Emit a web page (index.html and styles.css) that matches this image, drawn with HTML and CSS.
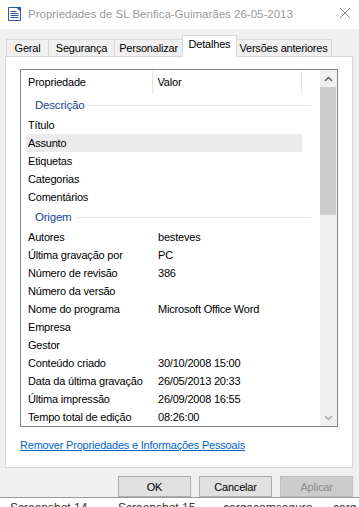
FILE: index.html
```html
<!DOCTYPE html>
<html lang="pt">
<head>
<meta charset="utf-8">
<title>Propriedades</title>
<link rel="stylesheet" href="styles.css">
</head>
<body>
<div class="dialog">
  <div class="titlebar">
    <svg class="app-icon" width="13" height="14" viewBox="0 0 13 14">
      <path d="M0.5 0.5 H9 L12.5 4 V13.5 H0.5 Z" fill="#ffffff" stroke="#2b579a"/>
      <path d="M8 0 H13 V5 Z" fill="#2b579a"/>
      <rect x="2.5" y="4" width="6" height="1" fill="#2b579a"/>
      <rect x="2.5" y="6" width="8" height="1" fill="#2b579a"/>
      <rect x="2.5" y="8" width="8" height="1" fill="#2b579a"/>
      <rect x="2.5" y="10" width="8" height="1" fill="#2b579a"/>
    </svg>
    <span class="title">Propriedades de SL Benfica-Guimarães 26-05-2013</span>
    <svg class="close" width="10" height="10" viewBox="0 0 10 10">
      <path d="M0 0 L10 10 M10 0 L0 10" stroke="#8a8a8a" stroke-width="1"/>
    </svg>
  </div>

  <div class="tabs">
    <div class="tab tab-geral">Geral</div>
    <div class="tab tab-seg">Segurança</div>
    <div class="tab tab-pers">Personalizar</div>
    <div class="tab tab-det active">Detalhes</div>
    <div class="tab tab-ver">Versões anteriores</div>
  </div>

  <div class="panel">
    <div class="listbox">
      <div class="list">
        <div class="header">
          <div class="hcell hname">Propriedade</div>
          <div class="hcell hvalue">Valor</div>
        </div>
        <div class="group"><span>Descrição</span><i></i></div>
        <div class="row"><span class="k">Título</span><span class="v"></span></div>
        <div class="row selected"><span class="k">Assunto</span><span class="v"></span></div>
        <div class="row"><span class="k">Etiquetas</span><span class="v"></span></div>
        <div class="row"><span class="k">Categorias</span><span class="v"></span></div>
        <div class="row"><span class="k">Comentários</span><span class="v"></span></div>
        <div class="group group-2"><span>Origem</span><i></i></div>
        <div class="row"><span class="k">Autores</span><span class="v">besteves</span></div>
        <div class="row"><span class="k">Última gravação por</span><span class="v">PC</span></div>
        <div class="row"><span class="k">Número de revisão</span><span class="v">386</span></div>
        <div class="row"><span class="k">Número da versão</span><span class="v"></span></div>
        <div class="row"><span class="k">Nome do programa</span><span class="v">Microsoft Office Word</span></div>
        <div class="row"><span class="k">Empresa</span><span class="v"></span></div>
        <div class="row"><span class="k">Gestor</span><span class="v"></span></div>
        <div class="row"><span class="k">Conteúdo criado</span><span class="v">30/10/2008 15:00</span></div>
        <div class="row"><span class="k">Data da última gravação</span><span class="v">26/05/2013 20:33</span></div>
        <div class="row"><span class="k">Última impressão</span><span class="v">26/09/2008 16:55</span></div>
        <div class="row"><span class="k">Tempo total de edição</span><span class="v">08:26:00</span></div>
      </div>
      <div class="scrollbar">
        <div class="arrow">
          <svg width="9" height="6" viewBox="0 0 9 6"><path d="M1 5 L4.5 1.5 L8 5" fill="none" stroke="#606060" stroke-width="1.4"/></svg>
        </div>
        <div class="track"><div class="thumb"></div></div>
        <div class="arrow">
          <svg width="9" height="6" viewBox="0 0 9 6"><path d="M1 1 L4.5 4.5 L8 1" fill="none" stroke="#a6a6a6" stroke-width="1.4"/></svg>
        </div>
      </div>
    </div>
    <a class="link" href="#">Remover Propriedades e Informações Pessoais</a>
  </div>

  <div class="buttons">
    <button class="btn">OK</button>
    <button class="btn">Cancelar</button>
    <button class="btn disabled">Aplicar</button>
  </div>
</div>
<div class="behind">
  <span class="b1">Screenshot 14</span>
  <span class="b2">Screenshot 15</span>
  <span class="b3">cargacomseguro</span>
  <span class="b4">carg</span>
</div>
</body>
</html>
```

FILE: styles.css
```css
html, body {
  margin: 0;
  padding: 0;
  height: 507px;
  overflow: hidden;
  background: #ffffff;
}

body {
  font-family: "Liberation Sans", Arial, sans-serif;
  font-size: 11px;
  letter-spacing: -0.2px;
  color: #000;
}

.dialog {
  background: #f0f0f0;
  height: 498px;
  border-bottom: 1px solid #9a9a9a;
  box-sizing: border-box;
}

.titlebar {
  height: 29px;
  background: #ffffff;
  display: flex;
  align-items: center;
  padding-left: 8px;
  box-sizing: border-box;
}

.app-icon {
  flex: none;
  margin-top: -2px;
}

.title {
  margin-left: 7px;
  font-size: 11.5px;
  letter-spacing: 0;
  color: #9b9b9b;
  flex: 1;
  margin-top: -1px;
}

.close {
  margin-right: 9px;
  margin-top: -4px;
}

.tabs {
  height: 27px;
  display: flex;
  align-items: flex-end;
  padding-left: 6px;
}

.tab {
  height: 17px;
  line-height: 16px;
  box-sizing: border-box;
  border: 1px solid #d9d9d9;
  border-bottom: none;
  border-right: none;
  background: #f0f0f0;
  text-align: center;
}

.tab-geral { width: 42px; }
.tab-seg { width: 66px; }
.tab-pers { width: 68px; }
.tab-det { width: 55px; }
.tab-ver { width: 96px; border-right: 1px solid #d9d9d9; }

.tab.active {
  height: 22px;
  line-height: 17px;
  background: #ffffff;
  margin-bottom: -1px;
  position: relative;
  z-index: 1;
  border-right: 1px solid #d9d9d9;
  margin-right: -1px;
}

.tab-ver {
  border-left: none;
}

.panel {
  margin: 0 6px 0 5px;
  height: 412px;
  box-sizing: border-box;
  background: #ffffff;
  border: 1px solid #d9d9d9;
  padding: 12px 14px 0 14px;
}

.listbox {
  height: 358px;
  box-sizing: border-box;
  border: 1px solid #828790;
  display: flex;
  background: #fff;
}

.list {
  flex: 1;
  overflow: hidden;
  padding-top: 1px;
}

.header {
  height: 23px;
  display: flex;
  align-items: center;
  width: 281px;
}

.hcell {
  height: 23px;
  line-height: 22px;
  box-sizing: border-box;
  border-right: 1px solid #e5e5e5;
}

.hname {
  width: 132px;
  padding-left: 7px;
}

.hvalue {
  width: 150px;
  padding-left: 5px;
}

.group {
  height: 22px;
  display: flex;
  align-items: center;
  padding-left: 14px;
  color: #22439a;
  font-size: 11.5px;
}

.group-2 {
  height: 22px;
}

.group i {
  width: 0;
  flex-grow: 1;
  height: 1px;
  background: #e2e6ee;
  margin-left: 5px;
  margin-right: 10px;
}

.row {
  height: 18px;
  line-height: 18px;
  display: flex;
  margin-left: 5px;
  width: 276px;
  padding-left: 2px;
  box-sizing: border-box;
  white-space: nowrap;
}

.row.selected {
  background: #ececec;
}

.k {
  width: 130px;
  flex: none;
}

.v {
  flex: 1;
}

.scrollbar {
  width: 17px;
  flex: none;
  background: #f0f0f0;
  display: flex;
  flex-direction: column;
}

.arrow {
  height: 17px;
  display: flex;
  align-items: center;
  justify-content: center;
  flex: none;
}

.track {
  flex: 1;
  padding: 0 1px 0 0;
}

.thumb {
  height: 128px;
  background: #cdcdcd;
}

.link {
  display: block;
  margin-top: 11px;
  line-height: 15px;
  color: #0066cc;
  text-decoration: underline;
}

.buttons {
  display: flex;
  justify-content: flex-end;
  gap: 8px;
  padding: 8px 6px 0 0;
}

.btn {
  width: 73px;
  height: 21px;
  box-sizing: border-box;
  background: #e1e1e1;
  border: 1px solid #adadad;
  font-family: "Liberation Sans", Arial, sans-serif;
  font-size: 11px;
  letter-spacing: -0.2px;
  color: #000;
  padding: 0;
  margin: 0;
}

.btn.disabled {
  background: #cccccc;
  border-color: #bfbfbf;
  color: #8d8d8d;
}

.behind {
  position: relative;
  height: 9px;
  overflow: hidden;
  color: #333;
  font-size: 12px;
  letter-spacing: 0;
}

.behind span {
  position: absolute;
  top: 3px;
  white-space: nowrap;
}

.b1 { left: 10px; }
.b2 { left: 118px; }
.b3 { left: 223px; }
.b4 { left: 333px; }
```
